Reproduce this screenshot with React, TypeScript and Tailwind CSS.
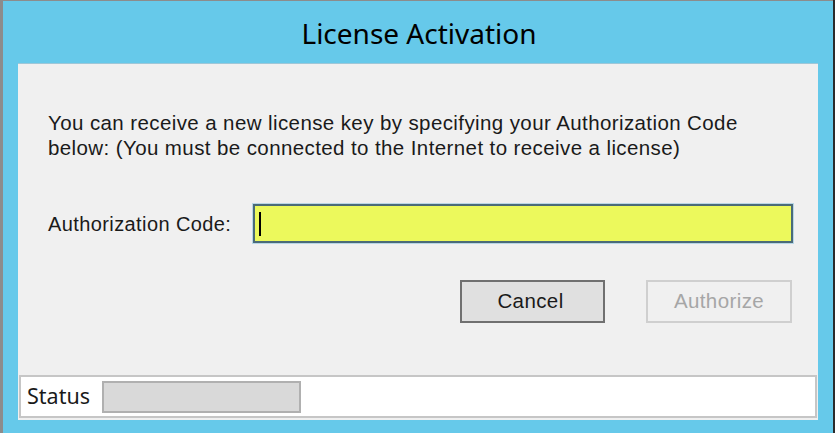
export default function App() {
  const ui = { fontFamily: '"Liberation Sans", Arial, sans-serif', letterSpacing: '0.4px' };
  return (
    <div className="w-[835px] h-[433px] bg-[#2b2b2b] overflow-hidden">
      <div className="w-[833px] h-[433px] bg-[#66c9ea] border-t border-l-[3px] border-[#8c8c8c] flex flex-col">
        <div
          className="h-[62px] flex items-start justify-center pt-[13px] text-[28px] leading-[38px] text-black pl-[2px]"
          style={{ fontFamily: '"Noto Sans", "Open Sans", sans-serif' }}
        >
          License Activation
        </div>
        <div className="ml-[15px] w-[800px] h-[357px] bg-[#f0f0f0] border-t border-[#9ec7d8] flex flex-col" style={ui}>
          <div className="pl-[30px] pt-[46px] text-[20.5px] leading-[25px] text-[#1a1a1a]">
            <div>You can receive a new license key by specifying your Authorization Code</div>
            <div>below: (You must be connected to the Internet to receive a license)</div>
          </div>
          <div className="flex items-center pl-[30px] mt-[44px]">
            <div className="w-[205px] text-[20px] text-[#1a1a1a]">Authorization Code:</div>
            <div className="w-[540px] h-[39px] bg-[#ecf95c] border-2 border-[#4b6b78] outline outline-1 outline-[#b9d6e6] flex items-center pl-[4px]">
              <div className="w-[2px] h-[24px] bg-black" />
            </div>
          </div>
          <div className="flex justify-end gap-[41px] pr-[26px] mt-[37px]">
            <button className="w-[145px] h-[43px] bg-[#e0e0e0] border-2 border-[#707070] text-[20.5px] text-[#1a1a1a] pr-[4px]">
              Cancel
            </button>
            <button className="w-[146px] h-[43px] bg-[#f0f0f0] border-2 border-[#cfcfcf] text-[20.5px] text-[#a6a6a6]">
              Authorize
            </button>
          </div>
          <div className="mt-auto mb-[2px] mx-[1px] h-[43px] bg-white border-2 border-[#c6c6c6] flex items-center pl-[6px] gap-[12px]">
            <span className="text-[21.5px] text-[#1a1a1a]" style={{ fontFamily: '"Noto Sans", sans-serif', letterSpacing: '0' }}>Status</span>
            <div className="w-[199px] h-[32px] bg-[#d9d9d9] border-2 border-[#b0b0b0]" />
          </div>
        </div>
      </div>
    </div>
  );
}
